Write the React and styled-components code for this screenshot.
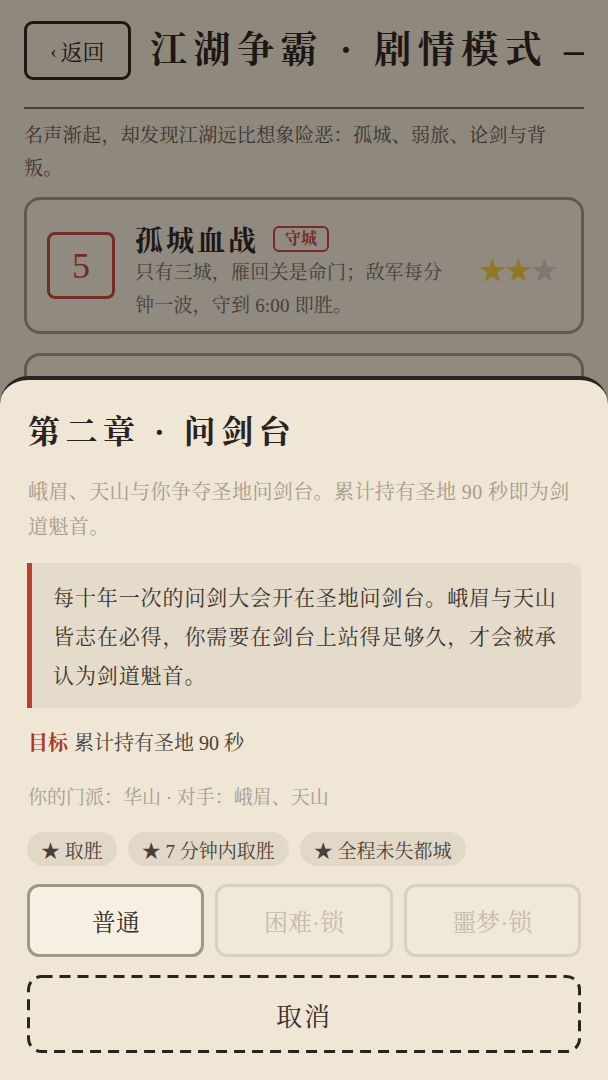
import React from "react";
import styled, { createGlobalStyle } from "styled-components";

const serif = `"Liberation Serif", "Noto Serif CJK SC", "Noto Sans CJK SC", serif`;

const dashSvg = encodeURIComponent(
  `<svg xmlns='http://www.w3.org/2000/svg' width='554' height='78'><rect x='1.5' y='1.5' width='551' height='75' rx='13' ry='13' fill='none' stroke='#2b2320' stroke-width='3' stroke-dasharray='11 7'/></svg>`
);

const GlobalStyle = createGlobalStyle`
  html, body {
    margin: 0;
    padding: 0;
    width: 608px;
    height: 1080px;
    overflow: hidden;
    background: #efe6d5;
  }
  body {
    font-family: ${serif};
    color: #2b2320;
  }
  * { box-sizing: border-box; }
`;

const Page = styled.div`
  width: 608px;
  height: 1080px;
  padding: 21px 24px 0 24px;
  background: #ede4d3;
  display: flex;
  flex-direction: column;
`;

const Header = styled.header`
  display: flex;
  align-items: center;
  gap: 19px;
  padding-bottom: 27px;
  border-bottom: 2px solid #6b645b;
`;

const BackButton = styled.button`
  flex: none;
  width: 107px;
  height: 59px;
  border: 3px solid #2b2320;
  border-radius: 9px;
  background: transparent;
  font-family: ${serif};
  font-size: 22px;
  color: #2b2320;
  display: flex;
  align-items: center;
  justify-content: center;
  gap: 4px;
  padding: 0;
`;

const Chevron = styled.span`
  font-size: 18px;
  margin-top: 3px;
`;

const Title = styled.h1`
  margin: 0;
  min-width: 0;
  flex: 1;
  overflow: hidden;
  white-space: nowrap;
  font-size: 37px;
  font-weight: 700;
  letter-spacing: 6.5px;
  line-height: 44px;
  color: #2b2320;
`;

const Intro = styled.p`
  margin: 10px 0 12px;
  font-size: 19px;
  letter-spacing: 0.35px;
  line-height: 33px;
  color: #5c544b;
`;

const LevelList = styled.div`
  display: flex;
  flex-direction: column;
  gap: 19px;
`;

const LevelCard = styled.div`
  display: flex;
  align-items: center;
  gap: 20px;
  min-height: 137px;
  padding: 0 24px 0 20px;
  border: 3px solid #9c9486;
  border-radius: 16px;
  background: #efe7d7;
`;

const NumberBox = styled.div`
  flex: none;
  width: 68px;
  height: 67px;
  border: 3px solid #c0473a;
  border-radius: 8px;
  color: #c0473a;
  font-family: ${serif};
  font-size: 36px;
  display: flex;
  align-items: center;
  justify-content: center;
`;

const LevelText = styled.div`
  flex: 1;
  min-width: 0;
  padding-top: 13px;
`;

const LevelTitleRow = styled.div`
  display: flex;
  align-items: center;
  gap: 14px;
  height: 34px;
`;

const LevelName = styled.span`
  font-size: 28px;
  font-weight: 700;
  letter-spacing: 3px;
  color: #2b2320;
`;

const Tag = styled.span`
  font-size: 16px;
  font-weight: 700;
  line-height: 22px;
  padding: 0 10px;
  border: 2px solid #c0473a;
  border-radius: 6px;
  color: #c0473a;
`;

const LevelDesc = styled.p`
  margin: 0;
  font-size: 19px;
  letter-spacing: 0.2px;
  line-height: 33px;
  color: #6e665c;
`;

const Stars = styled.div`
  flex: none;
  display: flex;
  padding-top: 6px;
  font-size: 27px;
  letter-spacing: -1px;
`;

const Star = styled.span`
  color: ${(p) => (p.$on ? "#f2c838" : "#cfc8bd")};
`;

const Overlay = styled.div`
  position: fixed;
  inset: 0;
  background: rgba(12, 9, 6, 0.42);
`;

const Sheet = styled.section`
  position: fixed;
  left: 0;
  right: 0;
  top: 376px;
  bottom: 0;
  background: #efe6d5;
  border-top: 4px solid #2b2320;
  border-radius: 28px 28px 0 0;
  padding: 32px 27px 0 27px;
  display: flex;
  flex-direction: column;
`;

const SheetTitle = styled.h2`
  margin: 0 0 0 1px;
  font-size: 32px;
  font-weight: 700;
  letter-spacing: 5.5px;
  line-height: 40px;
  color: #2b2320;
`;

const SheetDesc = styled.p`
  margin: 23px 0 0 1px;
  font-size: 20px;
  letter-spacing: 0.4px;
  line-height: 35px;
  color: #a69c8c;
`;

const Quote = styled.blockquote`
  margin: 18px 0 0 0;
  padding: 16px 18px 12px 21px;
  border-left: 5px solid #b8402f;
  border-radius: 0 12px 12px 0;
  background: #e4dbca;
  font-size: 21px;
  letter-spacing: 0.9px;
  line-height: 39px;
  color: #3d3530;
`;

const Goal = styled.p`
  margin: 20px 0 0 1px;
  font-size: 20px;
  line-height: 30px;
  color: #4a4038;
`;

const GoalLabel = styled.strong`
  color: #a8382a;
  font-weight: 700;
  margin-right: 6px;
`;

const Faction = styled.p`
  margin: 25px 0 0 1px;
  font-size: 19px;
  line-height: 30px;
  color: #a89e8e;
`;

const ChipRow = styled.div`
  display: flex;
  gap: 11px;
  margin-top: 19px;
`;

const Chip = styled.span`
  height: 34px;
  padding: 0 14px;
  border-radius: 17px;
  background: #e1d8c7;
  color: #4a4038;
  font-size: 19px;
  display: flex;
  align-items: center;
  gap: 6px;
`;

const DifficultyRow = styled.div`
  display: grid;
  grid-template-columns: repeat(3, 1fr);
  gap: 11px;
  margin-top: 18px;
`;

const DifficultyButton = styled.button`
  height: 73px;
  border-radius: 12px;
  border: 3px solid ${(p) => (p.$active ? "#9f9788" : "#d9d0c0")};
  background: ${(p) => (p.$active ? "#f6f0e3" : "#f0e8d8")};
  color: ${(p) => (p.$active ? "#3a302a" : "#c6bcab")};
  font-family: ${serif};
  font-size: 24px;
  padding: 0;
`;

const CancelButton = styled.button`
  margin-top: 18px;
  height: 78px;
  width: 100%;
  border: none;
  background: transparent url("data:image/svg+xml,${dashSvg}") no-repeat center / 100% 100%;
  font-family: ${serif};
  font-size: 26px;
  letter-spacing: 2px;
  color: #3a302a;
  padding: 0;
`;

const levels = [
  {
    n: 5,
    name: "孤城血战",
    tag: "守城",
    desc: "只有三城，雁回关是命门；敌军每分钟一波，守到 6:00 即胜。",
    stars: 2,
  },
  {
    n: 6,
    name: "弱旅突围",
    tag: "突围",
    desc: "兵少将寡，须在乱军之中杀出一条血路。",
    stars: 1,
  },
];

export default function App() {
  return (
    <>
      <GlobalStyle />
      <Page>
        <Header>
          <BackButton>
            <Chevron>‹</Chevron>返回
          </BackButton>
          <Title>江湖争霸 · 剧情模式 — 第二章</Title>
        </Header>
        <Intro>名声渐起，却发现江湖远比想象险恶：孤城、弱旅、论剑与背叛。</Intro>
        <LevelList>
          {levels.map((l) => (
            <LevelCard key={l.n}>
              <NumberBox>{l.n}</NumberBox>
              <LevelText>
                <LevelTitleRow>
                  <LevelName>{l.name}</LevelName>
                  <Tag>{l.tag}</Tag>
                </LevelTitleRow>
                <LevelDesc>{l.desc}</LevelDesc>
              </LevelText>
              <Stars>
                {[0, 1, 2].map((i) => (
                  <Star key={i} $on={i < l.stars}>★</Star>
                ))}
              </Stars>
            </LevelCard>
          ))}
        </LevelList>
      </Page>
      <Overlay />
      <Sheet>
        <SheetTitle>第二章 · 问剑台</SheetTitle>
        <SheetDesc>峨眉、天山与你争夺圣地问剑台。累计持有圣地 90 秒即为剑道魁首。</SheetDesc>
        <Quote>每十年一次的问剑大会开在圣地问剑台。峨眉与天山皆志在必得，你需要在剑台上站得足够久，才会被承认为剑道魁首。</Quote>
        <Goal>
          <GoalLabel>目标</GoalLabel>累计持有圣地 90 秒
        </Goal>
        <Faction>你的门派：华山 · 对手：峨眉、天山</Faction>
        <ChipRow>
          <Chip>★ 取胜</Chip>
          <Chip>★ 7 分钟内取胜</Chip>
          <Chip>★ 全程未失都城</Chip>
        </ChipRow>
        <DifficultyRow>
          <DifficultyButton $active>普通</DifficultyButton>
          <DifficultyButton>困难·锁</DifficultyButton>
          <DifficultyButton>噩梦·锁</DifficultyButton>
        </DifficultyRow>
        <CancelButton>取消</CancelButton>
      </Sheet>
    </>
  );
}
